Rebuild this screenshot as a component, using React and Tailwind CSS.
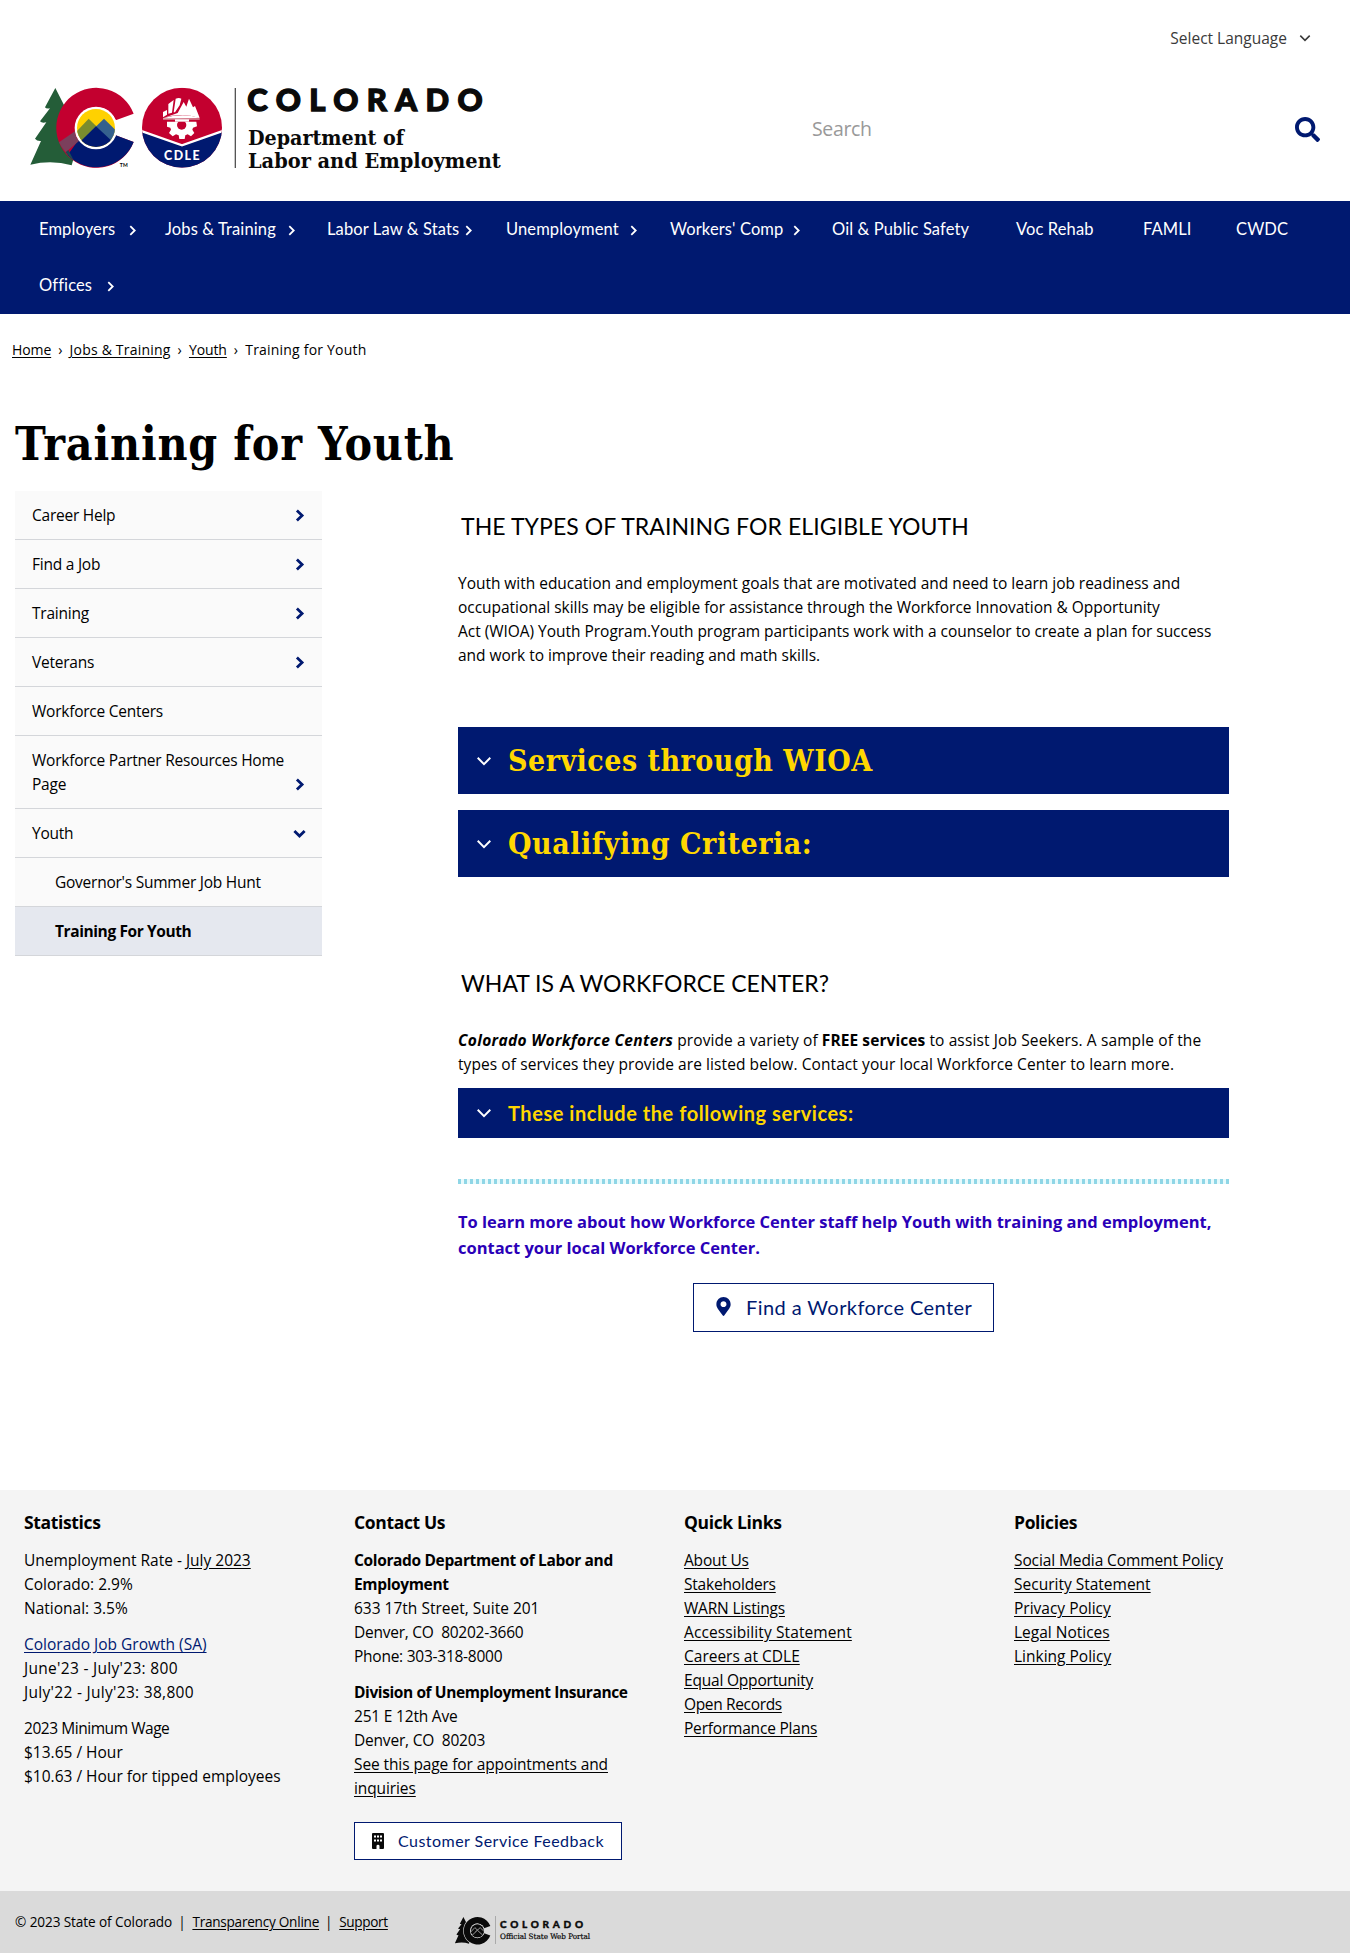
import { FaSearch, FaMapMarkerAlt } from "react-icons/fa";

const body = "font-['Open_Sans',sans-serif]";
const display = "font-[Lato,sans-serif]";
const slab = "font-['DejaVu_Serif_Condensed','DejaVu_Serif',serif]";

function Chevron({ className = "", width = 2, down = false }) {
  return (
    <svg viewBox="0 0 14 14" fill="none" stroke="currentColor" strokeWidth={width} className={className}>
      <path d={down ? "M1.5 4.2 L7 9.8 L12.5 4.2" : "M4.2 1.5 L9.8 7 L4.2 12.5"} />
    </svg>
  );
}

function TreeAndC({ mono = false }) {
  const k = (c) => (mono ? "#0a0a0a" : c);
  return (
    <g>
      <path
        d="M91 18 L60 76 Q63 81 75 79 L45 118 Q51 125 64 121 L30 170 Q36 178 48 177 L16 248 Q80 233 140 250 L160 180 L120 75 Z"
        fill={k("#245d38")}
      />
      {mono && <circle cx="215" cy="137" r="126" fill="#dadada" />}
      <path d="M326 95 A120 120 0 1 0 326 180 L272 160 A62 62 0 1 1 272 115 Z" fill={k("#c3002f")} />
      {!mono && (
        <>
          <path d="M128 219 L162 172 A62 62 0 0 0 272 160 L326 180 A120 120 0 0 1 128 219 Z" fill="#001970" />
          <path d="M102 181 L150 148 Q151 166 162 177 L122 211 Q109 197 102 181 Z" fill="#7b3f5c" />
          <path d="M122 211 L130 204 L146 235 Q132 226 122 211 Z" fill="#1b4a55" />
        </>
      )}
      <circle cx="213" cy="138" r="64" fill={mono ? "#dadada" : "#fff"} />
      <clipPath id={mono ? "disc-mono" : "disc"}>
        <circle cx="213" cy="138" r="57" />
      </clipPath>
      <g clipPath={mono ? "url(#disc-mono)" : "url(#disc)"}>
        <rect x="150" y="78" width="130" height="125" fill={k("#ffd100")} />
        <path d="M150 153 L191 110 L232 150 L180 190 Z" fill={k("#7a8c2e")} stroke={mono ? "#dadada" : "none"} strokeWidth="6" />
        <path d="M196 150 L237 110 L280 152 L260 190 Z" fill={k("#35618e")} stroke={mono ? "#dadada" : "none"} strokeWidth="6" />
        <path d="M213 133 L150 194 L150 205 L280 205 L280 195 Z" fill={k("#001970")} stroke={mono ? "#dadada" : "none"} strokeWidth="6" />
      </g>
    </g>
  );
}

function HeaderLogo() {
  return (
    <svg width="490" height="110" viewBox="0 -30 1470 330" className="block">
      <TreeAndC />
      <text x="284" y="256" fontSize="15" fontWeight="700" className={display} textLength="24">TM</text>
      <clipPath id="badge">
        <circle cx="471" cy="137" r="120" />
      </clipPath>
      <g clipPath="url(#badge)">
        <rect x="350" y="17" width="242" height="240" fill="#c3002f" />
        <path d="M350 150 L471 192 L592 150 V257 H350 Z" fill="#001970" />
        <path d="M348 147 L471 190 L594 147" fill="none" stroke="#fff" strokeWidth="7" />
      </g>
      <g fill="#fff">
        <path d="M414 90 L426 84 L426 98 L414 106 Z M430 66 L446 54 L441 92 L430 95 Z M452 50 Q462 46 469 50 L464 70 L450 91 L446 91 Z M414 109 L458 93 L476 60 L484 74 L492 50 L504 76 L510 72 L523 105 L523 108 Q468 90 414 109 Z" />
        <path d="M414 109 Q468 92 523 107 L523 108 L414 110 Z" />
        <rect x="414" y="109" width="110" height="4" fill="#d8a0a8" />
        <path d="M426 119 H514 L516 133 L504 137 L502 143 L508 153 L498 163 L488 157 L481 160 L479 171 H463 L461 160 L453 157 L443 163 L432 153 L438 143 L436 137 L426 134 Z" />
        <circle cx="470" cy="129" r="14" fill="#c3002f" />
        <rect x="450" y="112" width="42" height="7" fill="#fff" />
        <text x="417" y="233" fontSize="37" fontWeight="900" className={display} textLength="107">CDLE</text>
      </g>
      <rect x="629" y="18" width="4" height="240" fill="#555" />
      <g fill="#0a0a0a">
        <text x="667" y="86" fontSize="93" fontWeight="900" className={display} stroke="#0a0a0a" strokeWidth="4" textLength="706">COLORADO</text>
        <text x="669" y="188" fontSize="63" fontWeight="700" className={slab} textLength="468" lengthAdjust="spacingAndGlyphs">Department of</text>
        <text x="669" y="257" fontSize="63" fontWeight="700" className={slab} textLength="758" lengthAdjust="spacingAndGlyphs">Labor and Employment</text>
      </g>
    </svg>
  );
}

function PortalLogo() {
  return (
    <svg width="180" height="34" viewBox="0 0 180 34" className="block" fill="#0a0a0a">
      <g transform="translate(-2 0) scale(0.1145)">
        <TreeAndC mono />
      </g>
      <rect x="40" y="1" width="1" height="28" fill="#aaa" />
      <text x="45" y="13" fontSize="10" fontWeight="900" className={display} stroke="#0a0a0a" strokeWidth="0.4" textLength="83">COLORADO</text>
      <text x="45" y="24" fontSize="7.5" className={slab} stroke="#0a0a0a" strokeWidth="0.2" textLength="90" lengthAdjust="spacingAndGlyphs">Official State Web Portal</text>
    </svg>
  );
}

function NavItem({ label, className, arrow = true }) {
  return (
    <a className={`flex h-14 items-center justify-between whitespace-nowrap ${className}`}>
      <span>{label}</span>
      {arrow && <Chevron className="mt-0.5 -mr-0.5 size-[11px]" width={2.3} />}
    </a>
  );
}

function SideItem({ children, arrow, sub, active, tall }) {
  return (
    <li
      className={`flex items-end justify-between border-b border-[#d4d6da] pt-[11px] pr-4 pb-3 leading-6 ${sub ? "pl-10" : "pl-[17px]"} ${
        active ? "bg-[#e5e8ef] font-bold tracking-[-0.4px]" : "bg-[#fafafa]"
      } ${tall ? "h-[73px]" : "h-[49px]"}`}
    >
      <span className="-mr-4">{children}</span>
      {arrow && <Chevron className="mb-[5px] size-[13px] shrink-0 text-[#001970]" width={3} down={arrow === "down"} />}
    </li>
  );
}

function Accordion({ children, className }) {
  return (
    <div className={`flex items-center bg-[#001970] pl-[18px] text-[#ffd700] ${className}`}>
      <Chevron className="mr-4 size-4 text-white" width={1.7} down />
      {children}
    </div>
  );
}

function Link({ children, className = "" }) {
  return <a className={`underline underline-offset-2 ${className}`}>{children}</a>;
}

function FooterColumn({ title, children }) {
  return (
    <div className="w-[330px] pr-6">
      <h3 className="mb-3 text-[17.5px] leading-7 font-bold tracking-[-0.35px]">{title}</h3>
      {children}
    </div>
  );
}

export default function App() {
  return (
    <div className={`flex h-[1953px] w-[1350px] flex-col overflow-hidden bg-white text-[15.5px] leading-6 text-black ${body}`}>
      <header className="h-[201px] shrink-0 pt-[26px]">
        <div className="flex items-center justify-end pr-[39px] text-[#3a3a3a]">
          <span>Select Language</span>
          <Chevron className="ml-3 size-3" width={1.8} down />
        </div>
        <div className="flex pt-[22px] pl-[25px]">
          <HeaderLogo />
          <div className="mt-[9px] ml-[297px] flex h-[96px] w-[508px] items-center justify-between">
            <span className="text-[19.5px] tracking-[-0.35px] text-[#999]">Search</span>
            <FaSearch className="size-[25px] text-[#001970]" />
          </div>
        </div>
      </header>

      <nav className={`h-[113px] shrink-0 bg-[#001970] pl-[39px] text-[16.5px] tracking-[0.12px] text-white ${display}`}>
        <div className="flex">
          <NavItem label="Employers" className="mr-[29px] w-[97px]" />
          <NavItem label="Jobs & Training" className="mr-8 w-[130px]" />
          <NavItem label="Labor Law & Stats" className="mr-[34px] w-[145px]" />
          <NavItem label="Unemployment" className="mr-[33px] w-[131px]" />
          <NavItem label="Workers' Comp" className="mr-8 w-[130px]" />
          <NavItem label="Oil & Public Safety" className="w-[184px]" arrow={false} />
          <NavItem label="Voc Rehab" className="w-[127px]" arrow={false} />
          <NavItem label="FAMLI" className="w-[93px]" arrow={false} />
          <NavItem label="CWDC" className="" arrow={false} />
        </div>
        <NavItem label="Offices" className="w-[75px]" />
      </nav>

      <div className="mt-6 flex h-6 items-center gap-[7px] pl-3 text-[14px] tracking-[0.2px]">
        <Link className="tracking-[-0.1px]">Home</Link>
        <span>›</span>
        <Link>Jobs &amp; Training</Link>
        <span>›</span>
        <Link className="tracking-[-0.1px]">Youth</Link>
        <span>›</span>
        <span>Training for Youth</span>
      </div>

      <h1 className={`mt-[50px] ml-[15px] h-16 text-[46px] leading-[64px] font-bold tracking-[0.8px] whitespace-nowrap ${slab}`}>
        Training for Youth
      </h1>

      <div className="flex h-[1014px] shrink-0 pt-[15px] pl-[15px]">
        <aside className="w-[307px]">
          <ul className="tracking-[-0.24px]">
            <SideItem arrow="right">Career Help</SideItem>
            <SideItem arrow="right">Find a Job</SideItem>
            <SideItem arrow="right">Training</SideItem>
            <SideItem arrow="right">Veterans</SideItem>
            <SideItem>Workforce Centers</SideItem>
            <SideItem arrow="right" tall>
              Workforce Partner Resources Home
              <br />
              Page
            </SideItem>
            <SideItem arrow="down">Youth</SideItem>
            <SideItem sub>Governor's Summer Job Hunt</SideItem>
            <SideItem sub active>Training For Youth</SideItem>
          </ul>
        </aside>

        <main className="ml-[136px] w-[771px]">
          <h2 className={`mt-[17px] ml-[3px] text-[23px] leading-9 tracking-[0.08px] ${display}`}>THE TYPES OF TRAINING FOR ELIGIBLE YOUTH</h2>
          <p className="mt-[27px] tracking-[-0.03px] whitespace-nowrap">
            Youth with education and employment goals that are motivated and need to learn job readiness and
            <br />
            occupational skills may be eligible for assistance through the Workforce Innovation &amp; Opportunity
            <br />
            Act (WIOA) Youth Program.Youth program participants work with a counselor to create a plan for success
            <br />
            and work to improve their reading and math skills.
          </p>
          <Accordion className={`mt-[60px] h-[67px] text-[30px] font-bold tracking-[0.5px] ${slab}`}>Services through WIOA</Accordion>
          <Accordion className={`mt-4 h-[67px] text-[30px] font-bold tracking-[0.5px] ${slab}`}>Qualifying Criteria:</Accordion>

          <h2 className={`mt-[88px] ml-[3px] text-[23px] leading-9 ${display}`}>WHAT IS A WORKFORCE CENTER?</h2>
          <p className="mt-[27px] tracking-[0.08px] whitespace-nowrap">
            <strong className="tracking-[0.34px] italic">Colorado Workforce Centers</strong> provide a variety of{" "}
            <strong>FREE services</strong> <span className="tracking-[0.12px]">to assist Job Seekers. A sample of the</span>
            <br />
            types of services they provide are listed below. Contact your local Workforce Center to learn more.
          </p>
          <Accordion className={`mt-3 h-[50px] text-[20px] font-bold tracking-[0.54px] ${display}`}>
            These include the following services:
          </Accordion>
          <div className="mt-[41px] h-[5px] bg-[repeating-linear-gradient(90deg,#8fd6e6_0,#8fd6e6_3px,#e8fafc_3px,#e8fafc_6px)]" />
          <p className="mt-[25px] text-[16.5px] leading-[26px] font-bold tracking-[-0.02px] whitespace-nowrap text-[#2a00b8]">
            To learn more about how Workforce Center staff help Youth with training and employment,
            <br />
            contact your local Workforce Center.
          </p>
          <a className={`mx-auto mt-[22px] flex h-[49px] w-[301px] items-center border border-[#001970] pb-0.5 pl-[21px] text-[20px] tracking-[0.43px] text-[#001970] ${display}`}>
            <FaMapMarkerAlt className="mr-[14px] h-[19px] w-[17px]" />
            Find a Workforce Center
          </a>
        </main>
      </div>

      <footer className="flex min-h-0 flex-1 flex-col">
        <div className="flex h-[401px] shrink-0 bg-[#f4f4f4] pt-[18px] pl-6">
          <FooterColumn title="Statistics">
            <p className="mb-3">
              Unemployment Rate - <Link>July 2023</Link>
              <br />
              Colorado: 2.9%
              <br />
              National: 3.5%
            </p>
            <p className="mb-3">
              <Link className="text-[#001970]">Colorado Job Growth (SA)</Link>
              <br />
              <span className="tracking-[0.3px]">
                June'23 - July'23: 800
                <br />
                July'22 - July'23: 38,800
              </span>
            </p>
            <p className="whitespace-nowrap">
              <span className="tracking-[-0.45px]">2023 Minimum Wage</span>
              <br />
              $13.65 / Hour
              <br />
              $10.63 / Hour for tipped employees
            </p>
          </FooterColumn>
          <FooterColumn title="Contact Us">
            <p className="mb-3 whitespace-nowrap">
              <strong className="tracking-[-0.35px]">
                Colorado Department of Labor and
                <br />
                Employment
              </strong>
              <br />
              633 17th Street, Suite 201
              <br />
              <span className="tracking-[-0.25px]">
                Denver, CO&nbsp; 80202-3660
                <br />
                Phone: 303-318-8000
              </span>
            </p>
            <p className="whitespace-nowrap">
              <strong className="tracking-[-0.4px]">Division of Unemployment Insurance</strong>
              <br />
              <span className="tracking-[-0.2px]">
                251 E 12th Ave
                <br />
                Denver, CO&nbsp; 80203
              </span>
              <br />
              <Link className="tracking-[-0.1px]">
                See this page for appointments and
                <br />
                inquiries
              </Link>
            </p>
            <a className={`mt-[22px] flex h-[38px] w-[268px] items-center border border-[#001970] bg-white pl-[17px] text-[16px] tracking-[0.47px] whitespace-nowrap text-[#001970] ${display}`}>
              <svg viewBox="0 0 12 16" className="mr-[14px] h-4 w-3 shrink-0 text-[#0a0a0a]">
                <path
                  fill="currentColor"
                  fillRule="evenodd"
                  d="M1 0H11Q12 0 12 1V15Q12 16 11 16H7.5V13Q7.5 11.8 6 11.8T4.5 13V16H1Q0 16 0 15V1Q0 0 1 0Z M2 2.5V4.5H4V2.5Z M5 2.5V4.5H7V2.5Z M8 2.5V4.5H10V2.5Z M2 6.5V8.5H4V6.5Z M5 6.5V8.5H7V6.5Z M8 6.5V8.5H10V6.5Z"
                />
              </svg>
              Customer Service Feedback
            </a>
          </FooterColumn>
          <FooterColumn title="Quick Links">
            <ul className="tracking-[-0.2px]">
              <li><Link>About Us</Link></li>
              <li><Link>Stakeholders</Link></li>
              <li><Link>WARN Listings</Link></li>
              <li><Link className="tracking-[0.1px]">Accessibility Statement</Link></li>
              <li><Link className="tracking-[0px]">Careers at CDLE</Link></li>
              <li><Link>Equal Opportunity</Link></li>
              <li><Link className="tracking-[-0.35px]">Open Records</Link></li>
              <li><Link>Performance Plans</Link></li>
            </ul>
          </FooterColumn>
          <FooterColumn title="Policies">
            <ul>
              <li><Link className="tracking-[-0.1px]">Social Media Comment Policy</Link></li>
              <li><Link>Security Statement</Link></li>
              <li><Link>Privacy Policy</Link></li>
              <li><Link>Legal Notices</Link></li>
              <li><Link>Linking Policy</Link></li>
            </ul>
          </FooterColumn>
        </div>
        <div className="flex flex-1 bg-[#dadada] pl-[15px]">
          <div className="mt-[19px] flex h-6 w-[440px] items-center gap-[7px] text-[13.6px] tracking-[-0.25px] whitespace-nowrap">
            <span className="tracking-[-0.1px]">© 2023 State of Colorado</span>
            <span className="-ml-px">|</span>
            <Link>Transparency Online</Link>
            <span className="-ml-px">|</span>
            <Link className="tracking-[-0.35px]">Support</Link>
          </div>
          <div className="mt-6">
            <PortalLogo />
          </div>
        </div>
      </footer>
    </div>
  );
}
